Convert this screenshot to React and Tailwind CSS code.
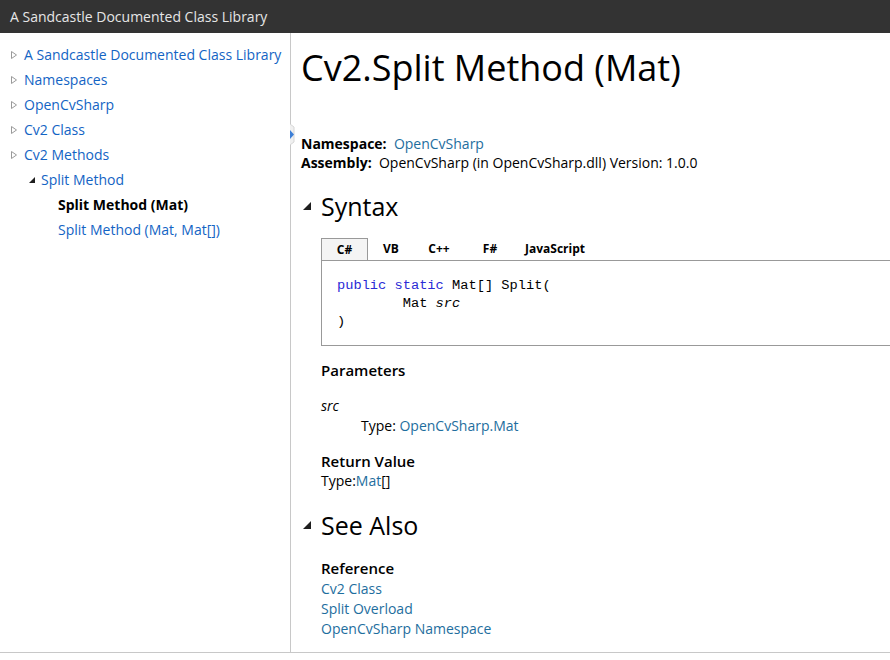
const font = { fontFamily: '"Open Sans", "Noto Sans", sans-serif' };

const tocItems = [
  { label: 'A Sandcastle Documented Class Library', level: 0, kind: 'closed' },
  { label: 'Namespaces', level: 0, kind: 'closed' },
  { label: 'OpenCvSharp', level: 0, kind: 'closed' },
  { label: 'Cv2 Class', level: 0, kind: 'closed' },
  { label: 'Cv2 Methods', level: 0, kind: 'closed' },
  { label: 'Split Method', level: 1, kind: 'open' },
  { label: 'Split Method (Mat)', level: 2, kind: 'current' },
  { label: 'Split Method (Mat, Mat[])', level: 2, kind: 'leaf' },
];

function ClosedArrow() {
  return (
    <svg width="6" height="8" viewBox="0 0 6 8" className="shrink-0">
      <path d="M0.5 0.5 L5.5 4 L0.5 7.5 Z" fill="none" stroke="#9a9a9a" strokeWidth="1" />
    </svg>
  );
}

function OpenArrow({ size = 6 }) {
  return (
    <svg width={size} height={size} viewBox="0 0 6 6" className="shrink-0">
      <path d="M6 0 L6 6 L0 6 Z" fill="#1e1e1e" />
    </svg>
  );
}

function TocRow({ item }) {
  const pad = item.level === 0 ? 'pl-[11px]' : item.level === 1 ? 'pl-[29px]' : 'pl-[58px]';
  return (
    <div className={`flex items-center h-[25px] ${pad}`}>
      {item.kind === 'closed' && <span className="w-[13px] flex"><ClosedArrow /></span>}
      {item.kind === 'open' && <span className="w-[12px] flex"><OpenArrow /></span>}
      <span
        className={
          item.kind === 'current'
            ? 'text-[14px] font-bold text-black whitespace-nowrap'
            : 'text-[14px] text-[#1364c4] whitespace-nowrap'
        }
      >
        {item.label}
      </span>
    </div>
  );
}

function SectionHeading({ children }) {
  return (
    <div className="flex items-center h-[34px]">
      <span className="w-[20px] flex pl-[2px]"><OpenArrow size={8} /></span>
      <h2 className="text-[25px] text-black leading-none">{children}</h2>
    </div>
  );
}

export default function App() {
  return (
    <div className="w-[890px] h-[660px] bg-white overflow-hidden flex flex-col" style={font}>
      <div className="h-[33px] bg-[#333333] flex items-center px-[10px] shrink-0">
        <span className="text-[14px] text-[#e6e6e6]">A Sandcastle Documented Class Library</span>
      </div>

      <div className="flex h-[620px] border-b border-[#c8c8c8]">
        <div className="w-[291px] shrink-0 border-r border-[#c8c8c8] pt-[9px] relative">
          {tocItems.map((item) => (
            <TocRow key={item.label} item={item} />
          ))}
          <div className="absolute right-[-12px] top-[91px] w-[12px] h-[21px]">
            <svg width="12" height="21" viewBox="0 0 12 21">
              <path d="M0 0 L4 3 L4 18 L0 21" fill="#f0f0f0" stroke="#d6d6d6" strokeWidth="1" />
              <path d="M0 6 L4 10.5 L0 15 Z" fill="#3d7fd6" />
            </svg>
          </div>
        </div>

        <div className="flex-1 pl-[10px] text-[14px] text-black min-w-0">
          <h1 className="text-[36px] leading-none mt-[17px] mb-[48px] whitespace-nowrap">Cv2.Split Method (Mat)</h1>

          <div className="leading-[19px]">
            <div>
              <span className="font-bold">Namespace:</span>&nbsp; <span className="text-[#1e6e9e]">OpenCvSharp</span>
            </div>
            <div className="whitespace-nowrap">
              <span className="font-bold">Assembly:</span>&nbsp; OpenCvSharp (in OpenCvSharp.dll) Version: 1.0.0
            </div>
          </div>

          <div className="mt-[17px]">
            <SectionHeading>Syntax</SectionHeading>
          </div>

          <div className="ml-[20px] mt-[15px] mr-[-4px]">
            <div className="flex h-[23px] border-b border-[#999999] text-[12px] font-bold">
              <div className="w-[47px] bg-[#f4f4f4] border border-b-0 border-[#999999] flex items-center justify-center">C#</div>
              <div className="w-[46px] flex items-center justify-center">VB</div>
              <div className="w-[50px] flex items-center justify-center">C++</div>
              <div className="w-[52px] flex items-center justify-center">F#</div>
              <div className="w-[78px] flex items-center justify-center">JavaScript</div>
            </div>
            <div
              className="border border-t-0 border-[#999999] h-[85px] pl-[15px] pt-[16px] text-[13.7px] leading-[18px] whitespace-pre"
              style={{ fontFamily: '"Liberation Mono", monospace' }}
            >
              <div>
                <span className="text-[#2b2bd6]">public</span> <span className="text-[#2b2bd6]">static</span> Mat[] Split(
              </div>
              <div>
                {'        '}Mat <span className="italic">src</span>
              </div>
              <div>)</div>
            </div>
          </div>

          <div className="ml-[20px] mt-[14px]">
            <div className="text-[15px] font-semibold h-[20px] leading-[20px]">Parameters</div>
            <div className="italic mt-[16px] leading-[20px]">src</div>
            <div className="pl-[40px] leading-[20px]">
              Type: <span className="text-[#1e6e9e]">OpenCvSharp.Mat</span>
            </div>
            <div className="text-[15px] font-semibold mt-[15px] leading-[20px]">Return Value</div>
            <div className="leading-[20px]">
              Type:<span className="text-[#1e6e9e]">Mat</span>[]
            </div>
          </div>

          <div className="mt-[17px]">
            <SectionHeading>See Also</SectionHeading>
          </div>

          <div className="ml-[20px] mt-[16px] leading-[20px]">
            <div className="text-[15px] font-semibold mb-[1px]">Reference</div>
            <div className="text-[#1e6e9e]">Cv2 Class</div>
            <div className="text-[#1e6e9e]">Split Overload</div>
            <div className="text-[#1e6e9e]">OpenCvSharp Namespace</div>
          </div>
        </div>
      </div>
    </div>
  );
}
